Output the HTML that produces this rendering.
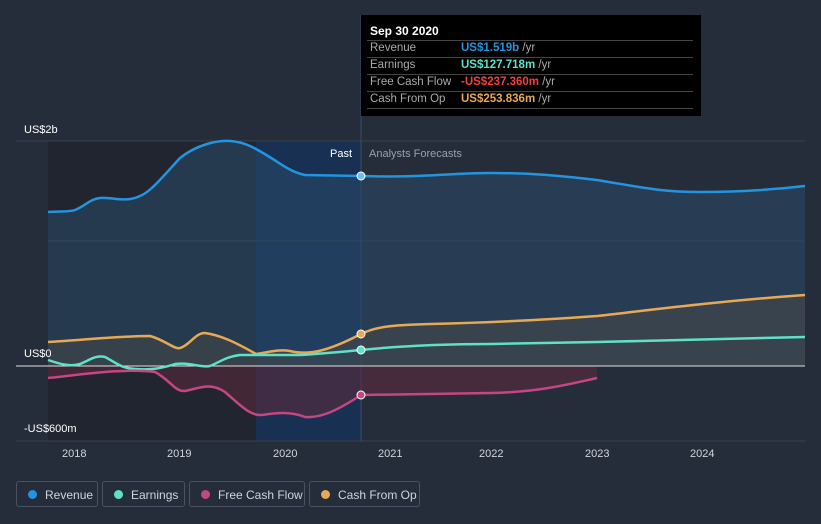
<!DOCTYPE html>
<html><head><meta charset="utf-8"><style>
body{margin:0;width:821px;height:524px;background:#262d3a;font-family:"Liberation Sans",sans-serif;overflow:hidden;position:relative}
.lbl{position:absolute;color:#fff;font-size:11px}
.ax{position:absolute;color:#d0d4da;font-size:11px;top:448px}
.tip{position:absolute;left:361px;top:15px;width:340px;height:101px;background:#000;}
.tip .h{color:#fff;font-weight:bold;font-size:12px;position:absolute;left:9px;top:9px}
.row{position:absolute;left:6px;width:326px;border-top:1px solid #444;height:16px;font-size:11.5px;color:#aaa}
.row span{position:absolute;left:3px;top:1px}
.row b{position:absolute;left:94px;top:1px;font-weight:bold}
.row i{font-style:normal;color:#aaa;font-weight:normal}
.leg{position:absolute;top:481px;height:26px;border:1px solid #4a5160;border-radius:3px;color:#d0d4da;font-size:12px;line-height:26px;box-sizing:border-box}
.leg:before{content:"";position:absolute;left:11px;top:8px;width:9px;height:9px;border-radius:50%;background:var(--c)}
.leg span{position:absolute;left:28px}
</style></head><body>
<svg width="821" height="524" style="position:absolute;left:0;top:0">
<rect x="48" y="141" width="313" height="300" fill="#20252f"/>
<rect x="256" y="141" width="105" height="300" fill="#17335a" opacity="0.8"/>
<line x1="16" y1="141" x2="805" y2="141" stroke="#3a414e"/>
<line x1="48" y1="241" x2="805" y2="241" stroke="#3a414e"/>
<line x1="16" y1="441" x2="805" y2="441" stroke="#3a414e"/>
<line x1="361" y1="15" x2="361" y2="441" stroke="#3a4c66"/>
<path d="M48,212 C60,211 70,212 75,210 C85,206 90,199 100,198 C115,197 125,203 140,196 C150,192 160,180 180,158 C195,146 215,140 230,141 C245,142 255,148 268,156 C280,163 290,172 305,175 L361,176 C420,178 450,173 491,173 C540,173 570,177 597,180 C640,187 660,192 700,192 C740,192 770,190 805,186 L805,366 L48,366Z" fill="#2a4a6a" opacity="0.55"/>
<path d="M48,342 C70,341 120,336 150,336 C165,340 175,350 180,348 C190,345 195,333 205,333 C220,335 235,342 256,354 C270,352 280,349 290,351 C310,356 330,350 361,334 C375,327 390,325 430,324 C470,323 530,321 597,316 C650,310 720,301 805,295 L805,366 L48,366Z" fill="#4a4a45" opacity="0.5"/>
<path d="M48,378 C80,375 120,368 155,372 C170,380 175,392 185,391 C200,388 210,382 225,392 C240,405 250,416 262,415 C275,413 290,411 305,417 C320,418 335,412 361,395 L491,393 C540,392 570,384 597,378 L597,366 L48,366Z" fill="#5a2a3e" opacity="0.6"/>
<line x1="16" y1="366" x2="805" y2="366" stroke="#e0e0e0"/>
<path d="M48,212 C60,211 70,212 75,210 C85,206 90,199 100,198 C115,197 125,203 140,196 C150,192 160,180 180,158 C195,146 215,140 230,141 C245,142 255,148 268,156 C280,163 290,172 305,175 L361,176 C420,178 450,173 491,173 C540,173 570,177 597,180 C640,187 660,192 700,192 C740,192 770,190 805,186" fill="none" stroke="#2394df" stroke-width="2.5"/>
<path d="M48,342 C70,341 120,336 150,336 C165,340 175,350 180,348 C190,345 195,333 205,333 C220,335 235,342 256,354 C270,352 280,349 290,351 C310,356 330,350 361,334 C375,327 390,325 430,324 C470,323 530,321 597,316 C650,310 720,301 805,295" fill="none" stroke="#e8a955" stroke-width="2.5"/>
<path d="M48,360 C60,364 70,367 80,364 C90,360 95,355 105,357 C115,362 120,368 135,369 C150,370 160,369 175,364 C190,362 200,368 210,366 C220,362 225,357 240,355 L300,355 C320,354 340,352 361,350 C400,346 450,344 491,344 L597,342 L805,337" fill="none" stroke="#5fe0c8" stroke-width="2.5"/>
<path d="M48,378 C80,375 120,368 155,372 C170,380 175,392 185,391 C200,388 210,382 225,392 C240,405 250,416 262,415 C275,413 290,411 305,417 C320,418 335,412 361,395 L491,393 C540,392 570,384 597,378" fill="none" stroke="#c44682" stroke-width="2.5"/>
<circle cx="361" cy="176" r="4" fill="#6cc0f5" stroke="#fff" stroke-width="1"/>
<circle cx="361" cy="334" r="4" fill="#e8a955" stroke="#fff" stroke-width="1"/>
<circle cx="361" cy="350" r="4" fill="#5fe0c8" stroke="#fff" stroke-width="1"/>
<circle cx="361" cy="395" r="4" fill="#c44682" stroke="#fff" stroke-width="1"/>
</svg>
<div class="lbl" style="left:24px;top:124px">US$2b</div>
<div class="lbl" style="left:24px;top:348px">US$0</div>
<div class="lbl" style="left:24px;top:423px">-US$600m</div>
<div class="lbl" style="left:330px;top:148px">Past</div>
<div class="lbl" style="left:369px;top:148px;color:#9aa0aa">Analysts Forecasts</div>
<div class="ax" style="left:62px">2018</div><div class="ax" style="left:167px">2019</div><div class="ax" style="left:273px">2020</div><div class="ax" style="left:378px">2021</div><div class="ax" style="left:479px">2022</div><div class="ax" style="left:585px">2023</div><div class="ax" style="left:690px">2024</div>
<div class="tip"><div class="h">Sep 30 2020</div>
<div class="row" style="top:25px"><span>Revenue</span><b style="color:#2394df">US$1.519b <i>/yr</i></b></div>
<div class="row" style="top:42px"><span>Earnings</span><b style="color:#5fe0c8">US$127.718m <i>/yr</i></b></div>
<div class="row" style="top:59px"><span>Free Cash Flow</span><b style="color:#f0413c">-US$237.360m <i>/yr</i></b></div>
<div class="row" style="top:76px;border-bottom:1px solid #444"><span>Cash From Op</span><b style="color:#e8a955">US$253.836m <i>/yr</i></b></div>
</div>
<div class="leg" style="left:16px;width:82px;--c:#2394df"><span>Revenue</span></div>
<div class="leg" style="left:102px;width:83px;--c:#5fe0c8"><span>Earnings</span></div>
<div class="leg" style="left:189px;width:116px;--c:#c44682"><span>Free Cash Flow</span></div>
<div class="leg" style="left:309px;width:111px;--c:#e8a955"><span>Cash From Op</span></div>
</body></html>
